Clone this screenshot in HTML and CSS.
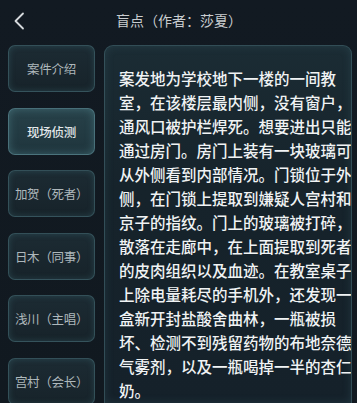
FILE: index.html
```html
<!DOCTYPE html>
<html lang="zh">
<head>
<meta charset="utf-8">
<link rel="stylesheet" href="styles.css">
</head>
<body>
<div class="page">
  <header class="topbar">
    <svg class="back" width="12" height="18" viewBox="0 0 12 18"><path d="M10 1.5 L2.5 9 L10 16.5" fill="none" stroke="#d6dadd" stroke-width="1.8" stroke-linecap="round" stroke-linejoin="round"/></svg>
    <div class="title">盲点（作者：莎夏）</div>
  </header>
  <div class="body">
    <nav class="side">
      <div class="tab">案件介绍</div>
      <div class="tab active">现场侦测</div>
      <div class="tab">加贺（死者）</div>
      <div class="tab">日木（同事）</div>
      <div class="tab">浅川（主唱）</div>
      <div class="tab">宫村（会长）</div>
    </nav>
    <section class="panel">
      <div class="text">
        <div class="ln">案发地为学校地下一楼的一间教</div>
        <div class="ln">室，在该楼层最内侧，没有窗户，</div>
        <div class="ln">通风口被护栏焊死。想要进出只能</div>
        <div class="ln">通过房门。房门上装有一块玻璃可</div>
        <div class="ln">从外侧看到内部情况。门锁位于外</div>
        <div class="ln">侧，在门锁上提取到嫌疑人宫村和</div>
        <div class="ln">京子的指纹。门上的玻璃被打碎，</div>
        <div class="ln">散落在走廊中，在上面提取到死者</div>
        <div class="ln">的皮肉组织以及血迹。在教室桌子</div>
        <div class="ln">上除电量耗尽的手机外，还发现一</div>
        <div class="ln">盒新开封盐酸舍曲林，一瓶被损</div>
        <div class="ln">坏、检测不到残留药物的布地奈德</div>
        <div class="ln">气雾剂，以及一瓶喝掉一半的杏仁</div>
        <div class="ln">奶。</div>
      </div>
    </section>
  </div>
</div>
</body>
</html>
```

FILE: styles.css
```css
* { box-sizing: border-box; }
html, body {
  margin: 0;
  padding: 0;
  background: #111921;
  overflow: hidden;
}
body {
  width: 357px;
  height: 403px;
  font-family: "Noto Sans CJK SC", "Noto Sans", sans-serif;
}
.page {
  width: 357px;
  height: 403px;
  overflow: hidden;
  background: linear-gradient(180deg, #121a22 0%, #111920 100%);
  display: flex;
  flex-direction: column;
}
.topbar {
  height: 45px;
  flex: none;
  display: flex;
  align-items: flex-start;
  padding-top: 11px;
  position: relative;
}
.back {
  margin-left: 13px;
  margin-top: 1px;
}
.title {
  position: absolute;
  left: 0;
  right: 0;
  top: 10px;
  text-align: center;
  color: #c9cdd0;
  font-size: 14px;
  line-height: 20px;
  padding-left: 1px;
}
.body {
  flex: 1;
  display: flex;
  padding-left: 8px;
  gap: 9px;
  min-height: 0;
  overflow: hidden;
}
.side {
  width: 87px;
  display: flex;
  flex-direction: column;
  gap: 15.6px;
  flex: none;
  overflow: hidden;
}
.tab {
  height: 47px;
  flex: none;
  border-radius: 7px;
  border: 1px solid rgba(74, 116, 126, 0.55);
  background: linear-gradient(180deg, #1c2b33 0%, #17232a 100%);
  box-shadow: inset 0 0 6px rgba(70, 120, 130, 0.35);
  color: #aeb8bc;
  font-size: 12.5px;
  display: flex;
  align-items: center;
  justify-content: center;
  white-space: nowrap;
  letter-spacing: -0.3px;
}
.tab.active {
  background: linear-gradient(180deg, #274149 0%, #1f353d 100%);
  border-color: rgba(100, 150, 160, 0.6);
  box-shadow: inset 0 0 8px rgba(100, 160, 170, 0.4);
  color: #e3e8ea;
  font-weight: 500;
}
.panel {
  width: 248px;
  flex: none;
  border-radius: 9px 9px 0 0;
  border: 1px solid rgba(70, 108, 118, 0.6);
  border-bottom: none;
  background: linear-gradient(180deg, #1b2c34 0%, #16232b 40%, #15212a 100%);
  box-shadow: inset 0 0 8px rgba(70, 120, 130, 0.25);
  padding: 20px 0 0 14px;
  overflow: hidden;
}
.text {
  color: #f0f3f4;
  font-size: 15.5px;
  line-height: 24px;
  font-weight: 500;
}
.ln {
  white-space: nowrap;
}
```
